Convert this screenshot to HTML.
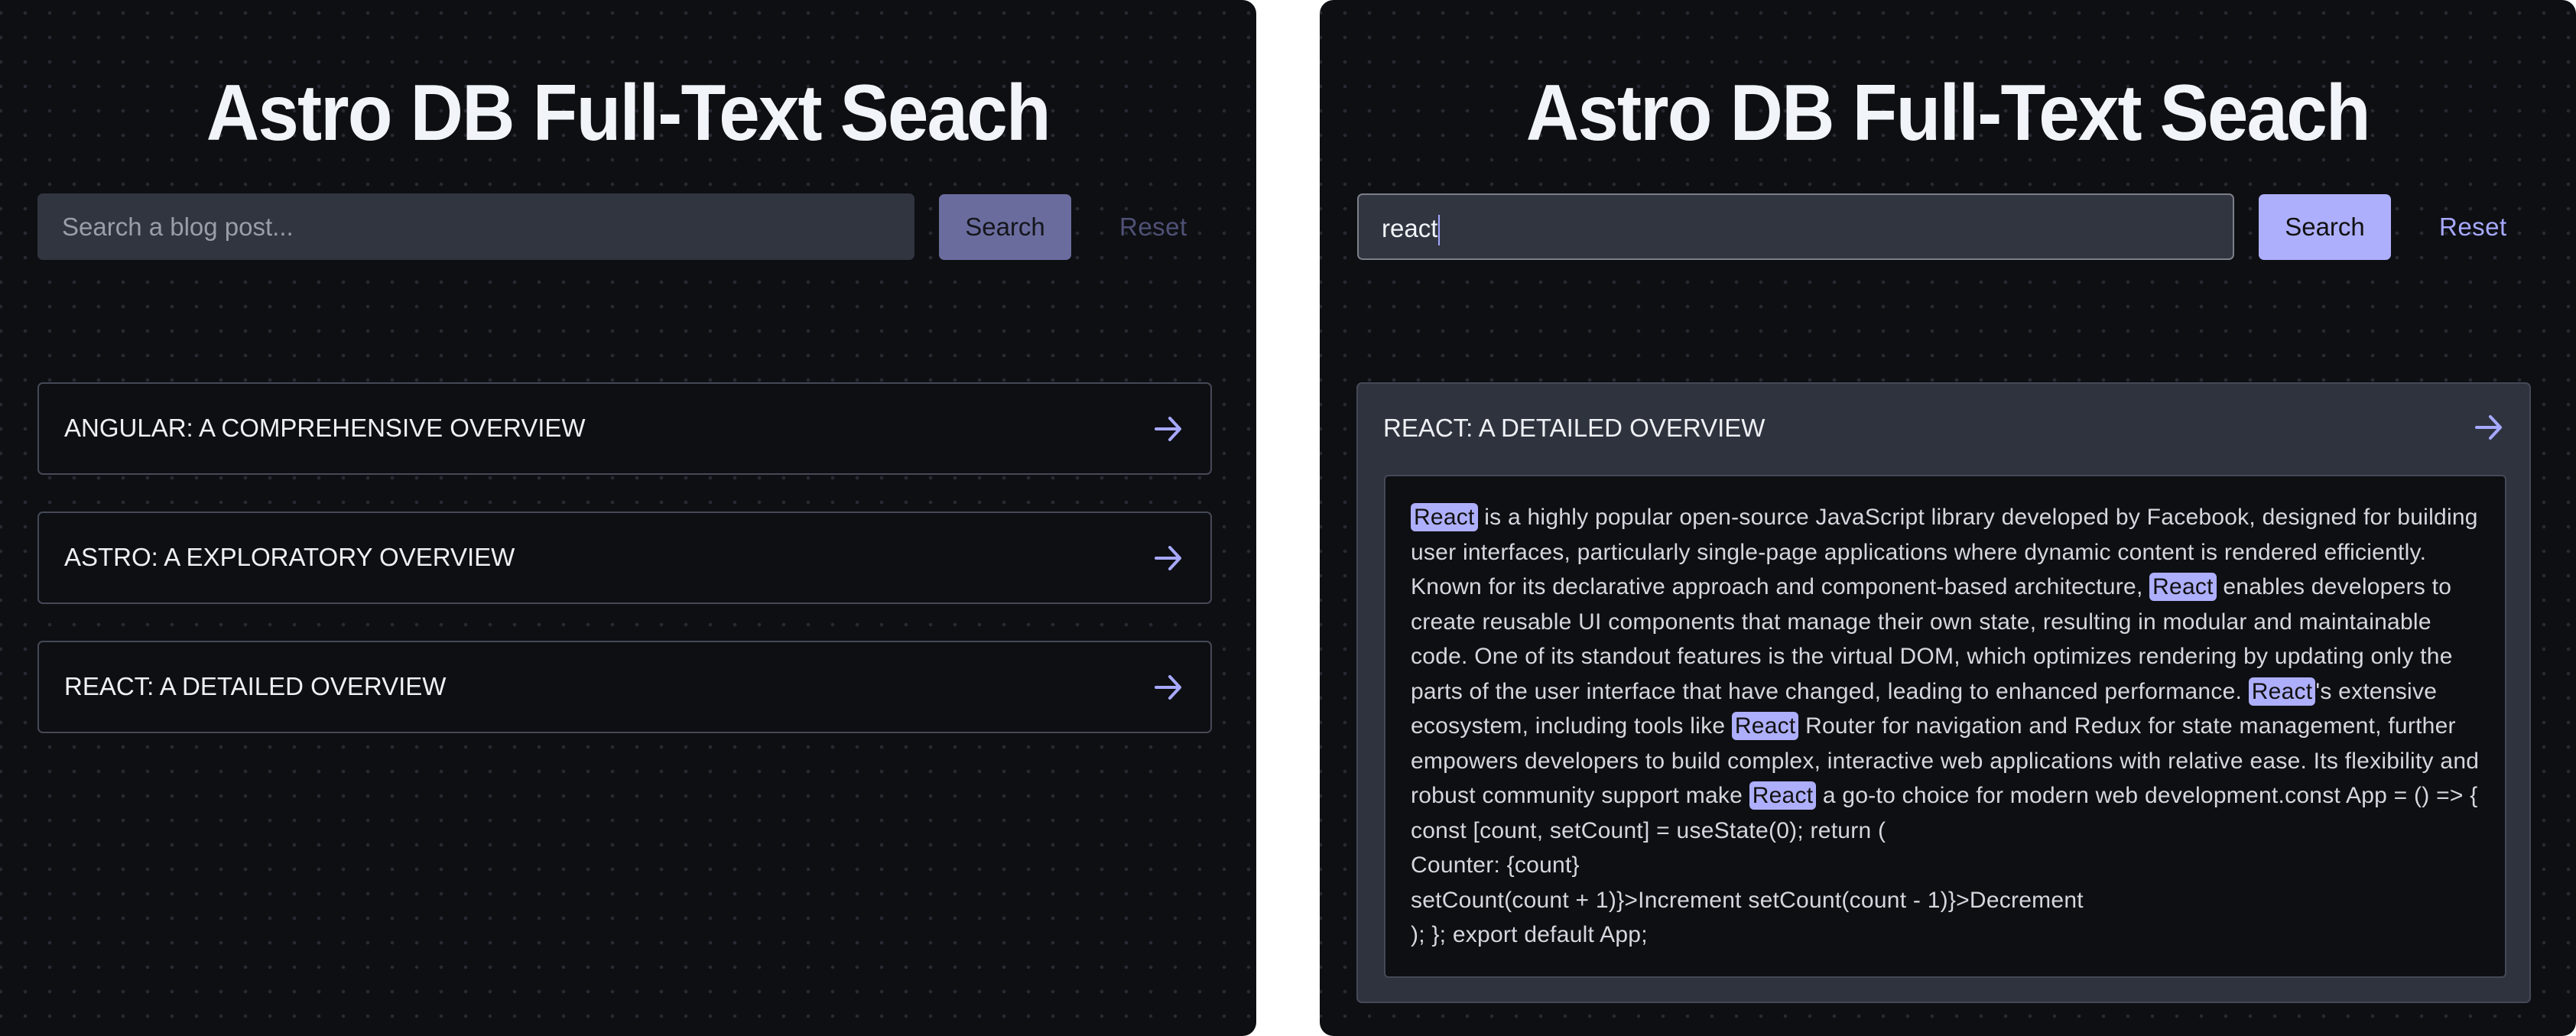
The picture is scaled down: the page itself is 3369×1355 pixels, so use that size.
<!DOCTYPE html>
<html><head><meta charset="utf-8">
<style>
*{box-sizing:border-box;margin:0;padding:0}
body{width:3369px;height:1355px;background:#fff;position:relative;overflow:hidden;font-family:"Liberation Sans",sans-serif}
.panel{position:absolute;top:0;width:1643px;height:1355px;border-radius:18px;background-color:#0e0f13;
background-image:radial-gradient(circle,#272a33 2px,transparent 2.6px);background-size:32px 32px;background-position:-15px 1px;overflow:hidden}
.p1{left:0;border-top-left-radius:0;border-bottom-left-radius:0}
.p2{left:1726px}
h1{position:absolute;left:0;right:0;top:88px;text-align:center;color:#f1f5f9;font-size:104px;font-weight:700;letter-spacing:-2px;line-height:120px}
h1 span{display:inline-block;transform:scaleX(0.925)}
.input{position:absolute;left:49px;top:253px;width:1147px;height:87px;background:#313540;border-radius:7px;font-size:33px;line-height:87px;padding-left:32px}
.p1 .input{color:#9a9ea8}
.p2 .input{border:2px solid #7b7f88;color:#f1f5f9;padding-left:30px}
.caret{display:inline-block;width:2px;height:40px;background:#a5a8ff;vertical-align:middle;margin-left:1px}
.btn{position:absolute;left:1228px;top:254px;width:173px;height:86px;border-radius:7px;font-size:33px;line-height:86px;text-align:center;color:#111}
.p1 .btn{background:#6b6c9e;color:#15161c}
.p2 .btn{background:#aeaffc}
.reset{position:absolute;left:1464px;top:254px;line-height:86px;font-size:33px;letter-spacing:0.5px}
.p1 .reset{color:#4f5176}
.p2 .reset{color:#a7a9ff}
.card{position:absolute;left:49px;width:1536px;height:121px;border:2px solid #454957;border-radius:7px;background:#0e0f13}
.card .t{position:absolute;left:33px;top:0;line-height:115px;font-size:33px;color:#eef0f4}
.arrow{position:absolute;right:36px;top:40px;width:38px;height:38px}
.big{position:absolute;left:48px;top:500px;width:1536px;height:812px;background:#2f333e;border:2px solid #454957;border-radius:7px}
.big .t{position:absolute;left:33px;top:0;line-height:116px;font-size:33px;color:#eef0f4}
.inner{position:absolute;left:34px;top:119px;width:1468px;height:658px;background:#0e0f13;border:2px solid #454957;border-radius:6px;padding:31px 0 0 33px;font-size:30px;letter-spacing:0.25px;line-height:45.5px;color:#d4d7de;white-space:nowrap}
mark{background:#aeaffc;color:#111;border-radius:6px;padding:2px 4px}
</style></head><body>
<div class="panel p1">
<h1><span>Astro DB Full-Text Seach</span></h1>
<div class="input">Search a blog post...</div>
<div class="btn">Search</div>
<div class="reset">Reset</div>
<div class="card" style="top:500px"><div class="t">ANGULAR: A COMPREHENSIVE OVERVIEW</div><svg class="arrow" viewBox="0 0 38 38"><path d="M3 19H34M21 5L34 19L21 33" fill="none" stroke="#a7a9ff" stroke-width="4" stroke-linecap="round" stroke-linejoin="round"/></svg></div>
<div class="card" style="top:669px"><div class="t">ASTRO: A EXPLORATORY OVERVIEW</div><svg class="arrow" viewBox="0 0 38 38"><path d="M3 19H34M21 5L34 19L21 33" fill="none" stroke="#a7a9ff" stroke-width="4" stroke-linecap="round" stroke-linejoin="round"/></svg></div>
<div class="card" style="top:838px"><div class="t">REACT: A DETAILED OVERVIEW</div><svg class="arrow" viewBox="0 0 38 38"><path d="M3 19H34M21 5L34 19L21 33" fill="none" stroke="#a7a9ff" stroke-width="4" stroke-linecap="round" stroke-linejoin="round"/></svg></div>
</div>
<div class="panel p2">
<h1><span>Astro DB Full-Text Seach</span></h1>
<div class="input">react<span class="caret"></span></div>
<div class="btn">Search</div>
<div class="reset">Reset</div>
<div class="big"><div class="t">REACT: A DETAILED OVERVIEW</div><svg class="arrow" style="right:34px;top:38px" viewBox="0 0 38 38"><path d="M3 19H34M21 5L34 19L21 33" fill="none" stroke="#a7a9ff" stroke-width="4" stroke-linecap="round" stroke-linejoin="round"/></svg>
<div class="inner"><mark>React</mark> is a highly popular open-source JavaScript library developed by Facebook, designed for building<br>user interfaces, particularly single-page applications where dynamic content is rendered efficiently.<br>Known for its declarative approach and component-based architecture, <mark>React</mark> enables developers to<br>create reusable UI components that manage their own state, resulting in modular and maintainable<br>code. One of its standout features is the virtual DOM, which optimizes rendering by updating only the<br>parts of the user interface that have changed, leading to enhanced performance. <mark>React</mark>'s extensive<br>ecosystem, including tools like <mark>React</mark> Router for navigation and Redux for state management, further<br>empowers developers to build complex, interactive web applications with relative ease. Its flexibility and<br>robust community support make <mark>React</mark> a go-to choice for modern web development.const App = () =&gt; {<br>const [count, setCount] = useState(0); return (<br>Counter: {count}<br>setCount(count + 1)}&gt;Increment setCount(count - 1)}&gt;Decrement<br>); }; export default App;</div>
</div>
</div>
</body></html>
